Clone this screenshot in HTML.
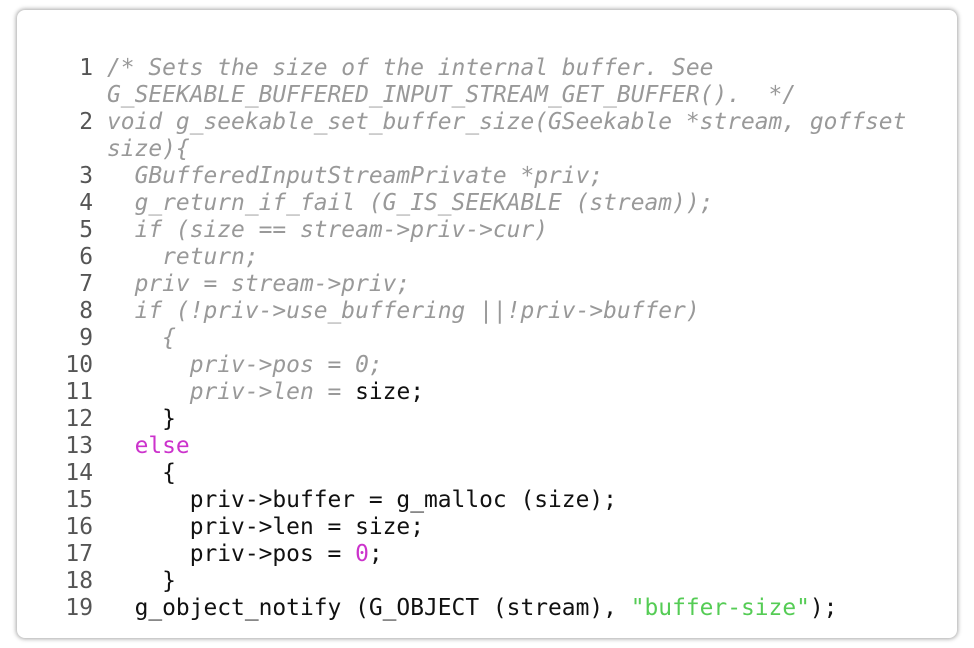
<!DOCTYPE html>
<html><head><meta charset="utf-8"><style>
html,body{margin:0;padding:0;background:#fff;width:974px;height:648px;overflow:hidden}
.card{position:absolute;left:17px;top:10px;width:940px;height:628px;background:#fff;border-radius:8px;box-shadow:0 0 4px 1px rgba(0,0,0,.35)}
.code{position:absolute;left:65px;top:55px;font-family:"DejaVu Sans Mono","Liberation Mono",monospace;font-size:22.9px;line-height:27px;color:#111}
.r{display:flex;white-space:pre}
.n{width:28px;text-align:right;color:#555;flex:none}
.t{margin-left:14px;width:820px;white-space:pre-wrap}
.c{color:#999;font-style:italic}
.k{color:#c3c}
.s{color:#5c5}
</style></head><body><div class="card"></div>
<div class="code">
<div class="r"><span class="n">1</span><span class="t c">/* Sets the size of the internal buffer. See
G_SEEKABLE_BUFFERED_INPUT_STREAM_GET_BUFFER().  */</span></div>
<div class="r"><span class="n">2</span><span class="t c">void g_seekable_set_buffer_size(GSeekable *stream, goffset
size){</span></div>
<div class="r"><span class="n">3</span><span class="t c">  GBufferedInputStreamPrivate *priv;</span></div>
<div class="r"><span class="n">4</span><span class="t c">  g_return_if_fail (G_IS_SEEKABLE (stream));</span></div>
<div class="r"><span class="n">5</span><span class="t c">  if (size == stream-&gt;priv-&gt;cur)</span></div>
<div class="r"><span class="n">6</span><span class="t c">    return;</span></div>
<div class="r"><span class="n">7</span><span class="t c">  priv = stream-&gt;priv;</span></div>
<div class="r"><span class="n">8</span><span class="t c">  if (!priv-&gt;use_buffering ||!priv-&gt;buffer)</span></div>
<div class="r"><span class="n">9</span><span class="t c">    {</span></div>
<div class="r"><span class="n">10</span><span class="t"><span class="c">      priv-&gt;pos = 0;</span></span></div>
<div class="r"><span class="n">11</span><span class="t"><span class="c">      priv-&gt;len = </span>size;</span></div>
<div class="r"><span class="n">12</span><span class="t">    }</span></div>
<div class="r"><span class="n">13</span><span class="t">  <span class="k">else</span></span></div>
<div class="r"><span class="n">14</span><span class="t">    {</span></div>
<div class="r"><span class="n">15</span><span class="t">      priv-&gt;buffer = g_malloc (size);</span></div>
<div class="r"><span class="n">16</span><span class="t">      priv-&gt;len = size;</span></div>
<div class="r"><span class="n">17</span><span class="t">      priv-&gt;pos = <span class="k">0</span>;</span></div>
<div class="r"><span class="n">18</span><span class="t">    }</span></div>
<div class="r"><span class="n">19</span><span class="t">  g_object_notify (G_OBJECT (stream), <span class="s">"buffer-size"</span>);</span></div>
</div>
</body></html>
